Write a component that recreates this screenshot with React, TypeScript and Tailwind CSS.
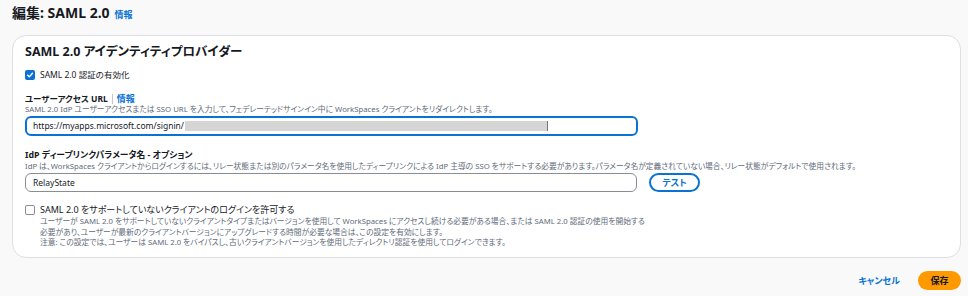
import React from "react";

const font = { fontFamily: '"Noto Sans", "Noto Sans CJK JP", sans-serif' };

function Info() {
  return <span className="text-[9px] font-bold text-[#0972d3]">情報</span>;
}

export default function App() {
  return (
    <div style={font} className="w-[968px] h-[296px] bg-[#f9f9fa] text-[#16191f] overflow-hidden [font-feature-settings:'palt']">
      <div className="px-3 pt-[3px]">
        <div className="flex items-baseline gap-[5px] h-[22px]">
          <h1 className="text-[14px] font-bold leading-[20px]">編集: SAML 2.0</h1>
          <Info />
        </div>
        <div className="mt-[10px] w-[949px] h-[223px] bg-white border border-[#dedee3] rounded-[14px] px-[12px] pt-[6px]">
          <h2 className="text-[12.5px] font-bold leading-[18px] mt-[1px]">SAML 2.0 アイデンティティプロバイダー</h2>
          <label className="mt-[8px] flex items-center gap-[5px] h-[12px]">
            <span className="w-[10px] h-[10px] rounded-[2px] bg-[#0972d3] flex items-center justify-center">
              <svg width="8" height="8" viewBox="0 0 10 10">
                <path d="M2 5.2 L4.2 7.3 L8 2.8" stroke="white" strokeWidth="1.8" fill="none" strokeLinecap="round" strokeLinejoin="round" />
              </svg>
            </span>
            <span className="text-[8.5px] leading-[12px]">SAML 2.0 認証の有効化</span>
          </label>

          <div className="mt-[12px] flex items-center gap-[4px] h-[11px]">
            <span className="text-[8.5px] font-bold leading-[11px]">ユーザーアクセス URL</span>
            <span className="w-px h-[10px] bg-[#c6c6cd]" />
            <Info />
          </div>
          <div className="text-[7.75px] leading-[10px] text-[#5f6b7a] whitespace-nowrap">SAML 2.0 IdP ユーザーアクセスまたは SSO URL を入力して、フェデレーテッドサインイン中に WorkSpaces クライアントをリダイレクトします。</div>
          <div className="mt-[2px] w-[613px] h-[20px] border-2 border-[#0972d3] rounded-[6px] flex items-center pl-[6px]">
            <span className="text-[8.5px] leading-[12px]">https://myapps.microsoft.com/signin/</span>
            <span className="ml-[1px] w-[363px] h-[10px] bg-[#d5d5d5] border-r border-[#777]" />
          </div>

          <div className="mt-[14px] text-[8.8px] font-bold leading-[11px]">IdP ディープリンクパラメータ名 - オプション</div>
          <div className="text-[7.75px] leading-[10px] text-[#5f6b7a] whitespace-nowrap">IdP は、WorkSpaces クライアントからログインするには、リレー状態または別のパラメータ名を使用したディープリンクによる IdP 主導の SSO をサポートする必要があります。パラメータ名が定義されていない場合、リレー状態がデフォルトで使用されます。</div>
          <div className="mt-[2px] flex items-center gap-[12px]">
            <div className="w-[612px] h-[19px] border border-[#8c8c94] rounded-[6px] flex items-center pl-[7px]">
              <span className="text-[8.5px] leading-[12px]">RelayState</span>
            </div>
            <button className="w-[51px] h-[19px] border-2 border-[#0972d3] rounded-full text-[9px] font-bold text-[#0972d3] flex items-center justify-center">テスト</button>
          </div>

          <div className="mt-[12px] flex gap-[5px]">
            <span className="mt-[1px] w-[10px] h-[10px] rounded-[2px] border border-[#8c8c94] bg-white shrink-0" />
            <div>
              <div className="text-[9px] leading-[11px]">SAML 2.0 をサポートしていないクライアントのログインを許可する</div>
              <div className="mt-[1px] text-[7.75px] leading-[10.5px] text-[#5f6b7a] whitespace-nowrap">
                <div>ユーザーが SAML 2.0 をサポートしていないクライアントタイプまたはバージョンを使用して WorkSpaces にアクセスし続ける必要がある場合、または SAML 2.0 認証の使用を開始する</div>
                <div>必要があり、ユーザーが最新のクライアントバージョンにアップグレードする時間が必要な場合は、この設定を有効にします。</div>
                <div>注意: この設定では、ユーザーは SAML 2.0 をバイパスし、古いクライアントバージョンを使用したディレクトリ認証を使用してログインできます。</div>
              </div>
            </div>
          </div>
        </div>
        <div className="mt-[13px] w-[949px] flex justify-end items-center gap-[18px]">
          <span className="text-[9px] font-bold text-[#0972d3]">キャンセル</span>
          <button className="w-[43px] h-[19px] rounded-full bg-[#ff9900] text-[9px] font-bold text-[#16191f] flex items-center justify-center">保存</button>
        </div>
      </div>
    </div>
  );
}
